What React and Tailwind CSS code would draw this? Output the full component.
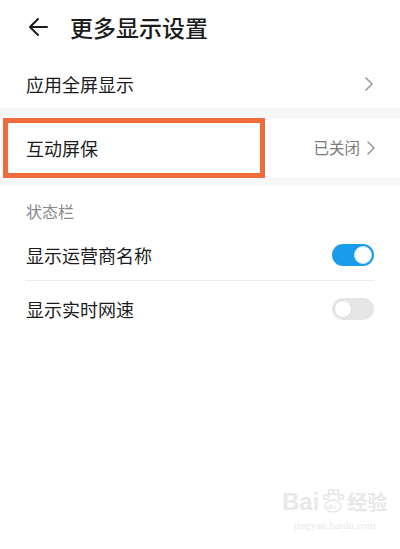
import React from 'react';

const font = { fontFamily: '"Noto Sans CJK SC", "Noto Sans", sans-serif' };

function Chevron() {
  return (
    <svg width="10" height="16" viewBox="0 0 10 16" fill="none">
      <path d="M2 2 L8 8 L2 14" stroke="#9a9a9a" strokeWidth="1.6" strokeLinecap="round" strokeLinejoin="round" />
    </svg>
  );
}

function Toggle({ on }) {
  return on ? (
    <div className="w-[42px] h-[22px] rounded-full bg-[#1a9cec] flex items-center justify-end pr-[2px]">
      <div className="w-[18px] h-[18px] rounded-full bg-white border border-[#cfe6f5]" />
    </div>
  ) : (
    <div className="w-[42px] h-[22px] rounded-full bg-[#e6e6e6] flex items-center pl-[2px]">
      <div className="w-[18px] h-[18px] rounded-full bg-white border border-[#dcdcdc]" />
    </div>
  );
}

export default function App() {
  return (
    <div className="w-[400px] h-[549px] bg-white relative overflow-hidden text-[#1c1c1c]" style={font}>
      {/* Header */}
      <div className="h-[60px] flex items-start pt-[13px] pl-[28px]">
        <svg width="20" height="20" viewBox="0 0 20 20" fill="none" className="mt-[4px]">
          <path d="M19 10 H2 M10 2 L2 10 L10 18" stroke="#1c1c1c" strokeWidth="2" strokeLinecap="round" strokeLinejoin="round" />
        </svg>
        <span className="ml-[22px] text-[23px] leading-[28px] font-medium">更多显示设置</span>
      </div>

      {/* Row 1 */}
      <div className="h-[48px] flex items-center justify-between pl-[26px] pr-[26px]">
        <span className="text-[18px]">应用全屏显示</span>
        <Chevron />
      </div>

      <div className="h-[10px] bg-[#f7f7f7]" />

      {/* Row 2 */}
      <div className="h-[60px] relative flex items-center justify-between pl-[26px] pr-[24px]">
        <span className="text-[18px]">互动屏保</span>
        <div className="flex items-center gap-[6px]">
          <span className="text-[15.5px] text-[#7a7a7a]">已关闭</span>
          <Chevron />
        </div>
        <div className="absolute left-[3px] top-0 w-[262px] h-[60px] border-[5px] border-[#ef6b3d]" />
      </div>

      <div className="h-[8px] bg-[#f7f7f7]" />

      {/* Status bar section */}
      <div className="h-[44px] pt-[13px] pl-[26px]">
        <span className="text-[16px] leading-[18px] text-[#888888]">状态栏</span>
      </div>

      <div className="mx-[26px]">
        <div className="h-[50px] flex items-center justify-between">
          <span className="text-[18px]">显示运营商名称</span>
          <Toggle on />
        </div>
        <div className="h-px bg-[#ececec]" />
        <div className="h-[56px] flex items-center justify-between">
          <span className="text-[18px]">显示实时网速</span>
          <Toggle on={false} />
        </div>
      </div>

      {/* Watermark */}
      <div className="absolute left-[282px] top-[488px] flex flex-col items-center text-[#e8e8e8]">
        <div className="flex items-end gap-[2px]">
          <span className="text-[24px] leading-[24px] font-bold" style={{ fontFamily: '"Liberation Sans", sans-serif' }}>Bai</span>
          <svg width="24" height="26" viewBox="0 0 24 26" fill="none" stroke="#e6e6e6" strokeWidth="1.5">
            <ellipse cx="12" cy="18" rx="8" ry="6" />
            <circle cx="5" cy="9" r="2.5" />
            <circle cx="10" cy="4" r="2.5" />
            <circle cx="15" cy="4" r="2.5" />
            <circle cx="20" cy="9" r="2.5" />
            <text x="6" y="21" fontSize="8" fill="#e6e6e6" stroke="none" fontFamily="Liberation Sans">du</text>
          </svg>
          <span className="text-[20px] leading-[24px] font-bold">经验</span>
        </div>
        <span className="text-[11px] leading-[16px] mt-[3px]" style={{ fontFamily: '"Liberation Serif", serif' }}>jingyan.baidu.com</span>
      </div>
    </div>
  );
}
